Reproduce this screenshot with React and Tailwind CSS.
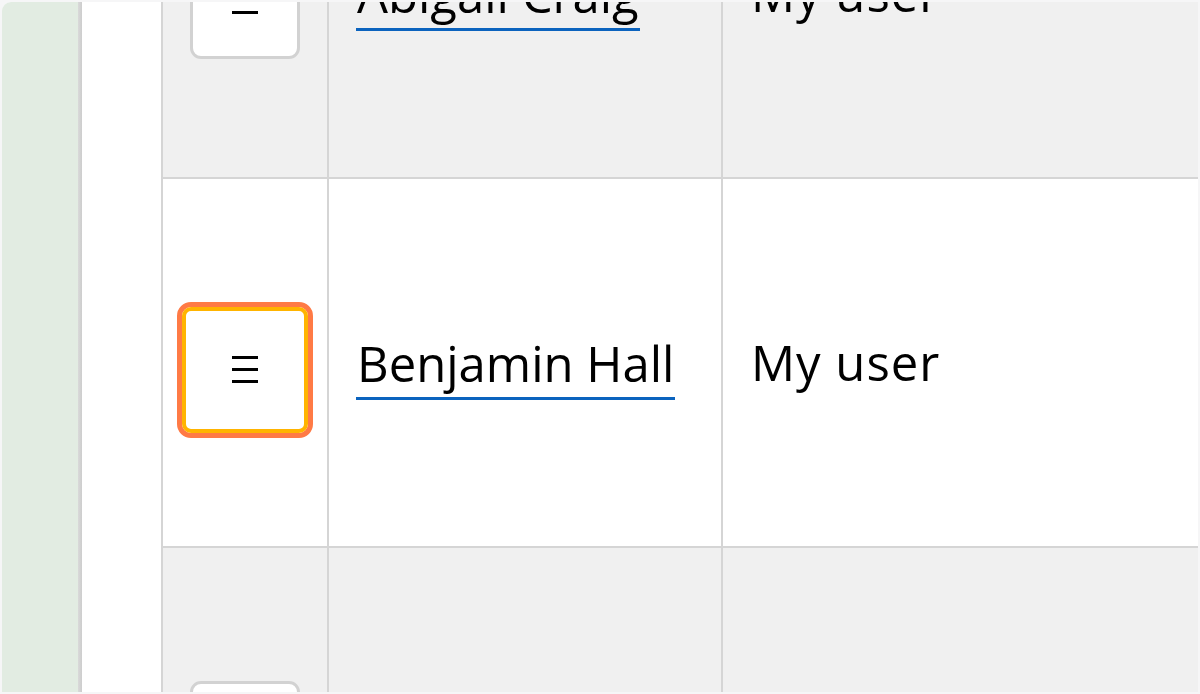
import React from "react";

const rows = [
  { name: "Abigail Craig", role: "My user", shade: true },
  { name: "Benjamin Hall", role: "My user", shade: false, focused: true },
  { name: "", role: "", shade: true },
];

function MenuIcon() {
  return (
    <div className="flex flex-col gap-[9px] w-[26px]">
      <span className="block h-[3px] w-full bg-black" />
      <span className="block h-[3px] w-full bg-black" />
      <span className="block h-[3px] w-full bg-black" />
    </div>
  );
}

function RowButton({ focused }) {
  if (focused) {
    return (
      <div className="rounded-[14px] border-[5px] border-[#ff7a45]">
        <div className="w-[126px] h-[126px] rounded-[9px] border-[4px] border-[#ffb400] bg-white flex items-center justify-center">
          <MenuIcon />
        </div>
      </div>
    );
  }
  return (
    <div className="w-[110px] h-[116px] rounded-[11px] border-[3px] border-[#d2d2d2] bg-white flex items-center justify-center">
      <MenuIcon />
    </div>
  );
}

export default function App() {
  return (
    <div className="w-[1200px] h-[694px] bg-[#f6f6f7] p-[2px] overflow-hidden" style={{ fontFamily: "'Open Sans', 'Liberation Sans', sans-serif" }}>
      <div className="flex h-full rounded-tl-[9px] overflow-hidden bg-white">
        {/* sidebar */}
        <div className="w-[76px] shrink-0 bg-[#e2ece2]" />
        <div className="w-[4px] shrink-0 bg-gradient-to-r from-[#d9d9d9] to-[#cdcdcd]" />
        <div className="w-[79px] shrink-0 bg-white" />

        {/* table */}
        <div className="flex-1 overflow-hidden border-l-2 border-[#d5d5d5]">
          <div className="-mt-[192px]">
            {rows.map((row, i) => (
              <div
                key={i}
                className={`flex h-[369px] border-b-2 border-[#d5d5d5] ${row.shade ? "bg-[#f0f0f0]" : "bg-white"}`}
              >
                <div className="w-[166px] shrink-0 border-r-2 border-[#d5d5d5] flex items-center justify-center pt-[14px] pr-[1px]">
                  <RowButton focused={row.focused} />
                </div>
                <div className="w-[394px] shrink-0 border-r-2 border-[#d5d5d5] flex items-center pl-[27px] pt-[10px]">
                  {row.name && (
                    <a className="text-[49px] leading-[56px] text-black border-b-[3px] border-[#0b63be] pb-[6px] px-[1px]">
                      {row.name}
                    </a>
                  )}
                </div>
                <div className="flex-1 flex items-center pl-[28px] pb-[2px]">
                  <span className="text-[49px] leading-[56px] tracking-[1px] text-black">{row.role}</span>
                </div>
              </div>
            ))}
          </div>
        </div>
      </div>
    </div>
  );
}
